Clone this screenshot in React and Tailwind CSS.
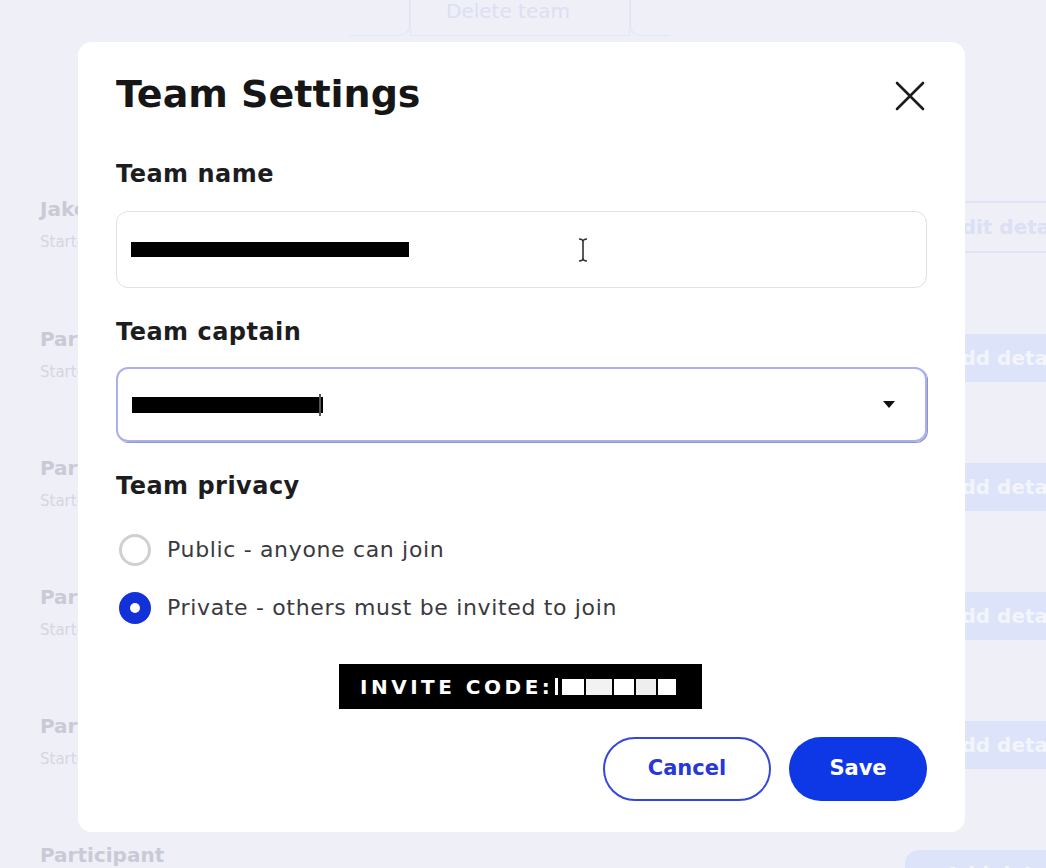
import React from 'react';

// Faded page content that sits behind the dialog
const ROWS = [
  { name: 'Jake Sample', sub: 'Starter', action: 'Edit details', outlined: true },
  { name: 'Participant', sub: 'Starter', action: 'Add details' },
  { name: 'Participant', sub: 'Starter', action: 'Add details' },
  { name: 'Participant', sub: 'Starter', action: 'Add details' },
  { name: 'Participant', sub: 'Starter', action: 'Add details' },
  { name: 'Participant', sub: 'Starter', action: 'Add details', wide: true },
];

function CloseIcon() {
  return (
    <svg width="32" height="32" viewBox="0 0 32 32" fill="none" stroke="#1c1c1c" strokeWidth="2.6" strokeLinecap="round">
      <path d="M3 3L29 29M29 3L3 29" />
    </svg>
  );
}

function IBeam() {
  return (
    <svg width="12" height="26" viewBox="0 0 12 26" fill="none" stroke="#333" strokeWidth="1.6">
      <path d="M2 2C4 2 6 3 6 5V21C6 23 4 24 2 24M10 2C8 2 6 3 6 5M10 24C8 24 6 23 6 21" />
    </svg>
  );
}

export default function App() {
  return (
    <div className="relative w-[1046px] h-[868px] overflow-hidden bg-[#efeff8]" style={{ fontFamily: '"DejaVu Sans", Verdana, sans-serif' }}>
      {/* background page */}
      <div className="flex flex-col">
        <div className="flex justify-center -mt-[14px] pr-[26px]">
          <div className="w-[60px] h-[50px] border border-[#e2e5f6] rounded-r-[10px] border-l-0" />
          <div className="w-[220px] h-[50px] border border-[#e4e6f6] flex items-end justify-center pb-[9px] pr-[24px] text-[20px] text-[#dcdff2]">Delete team</div>
          <div className="w-[40px] h-[50px] border border-[#e2e5f6] rounded-l-[10px] border-r-0" />
        </div>
        <div className="flex flex-col gap-[75px] mt-[162px] pl-[40px]">
          {ROWS.map((r, i) => (
            <div key={i} className="flex items-start justify-between">
              <div className="flex flex-col gap-[10px] -mt-[2px]">
                <div className="text-[20px] font-bold leading-[26px] text-[#cacad6]">{r.name}</div>
                <div className="text-[15px] leading-[20px] text-[#d6d6e0]">{r.sub}</div>
              </div>
              <div
                className={
                  r.outlined
                    ? 'w-[210px] h-[52px] -mr-[110px] mt-[3px] rounded-l-[10px] border-2 border-r-0 border-[#dfe3f6] flex items-center text-[20px] font-bold text-[#dbe0f5]'
                    : r.wide
                      ? 'w-[200px] h-[48px] -mr-[59px] mt-[6px] rounded-l-[14px] bg-[#dde3f8] flex items-center pl-[40px] text-[20px] font-bold text-[#f3f5fd]'
                      : 'w-[210px] h-[48px] -mr-[110px] mt-[6px] rounded-l-[10px] bg-[#dde3f8] flex items-center text-[20px] font-bold text-[#f3f5fd]'
                }
              >
                {r.action}
              </div>
            </div>
          ))}
        </div>
      </div>

      {/* dialog */}
      <div className="absolute left-[78px] top-[42px] w-[887px] h-[790px] bg-white rounded-[14px] px-[38px] pt-[28px] flex flex-col text-[#1d1d1f]">
        <div className="flex items-center justify-between">
          <h2 className="text-[38px] leading-[48px] font-bold text-[#161616]">Team Settings</h2>
          <button className="mr-[1px] mt-[3px]"><CloseIcon /></button>
        </div>

        <label className="mt-[42px] text-[24px] leading-[28px] font-bold tracking-[0.02em]">Team name</label>
        <div className="mt-[23px] h-[77px] rounded-[12px] border-[1.5px] border-[#e1e1e6] flex items-center pl-[14px] relative">
          <div className="w-[278px] h-[15px] bg-black" />
          <div className="absolute left-[460px] top-[25px]"><IBeam /></div>
        </div>

        <label className="mt-[30px] text-[24px] leading-[28px] font-bold tracking-[0.02em]">Team captain</label>
        <div className="mt-[21px] h-[75px] rounded-[12px] border-2 border-[#aab0ee] shadow-[1px_1px_0_#8f95c8] flex items-center justify-between pl-[14px] pr-[30px]">
          <div className="flex items-center">
            <div className="w-[191px] h-[16px] bg-black" />
            <div className="w-[1.5px] h-[22px] bg-[#555] -ml-[4px]" />
          </div>
          <svg width="12" height="7" viewBox="0 0 12 7"><path d="M0 0H12L6 7Z" fill="#111" /></svg>
        </div>

        <label className="mt-[30px] text-[24px] leading-[28px] font-bold tracking-[0.02em]">Team privacy</label>
        <div className="mt-[34px] flex flex-col gap-[26px]">
          <div className="flex items-center gap-[16px] pl-[3px]">
            <span className="w-[32px] h-[32px] rounded-full border-[3px] border-[#cfcfd4] bg-white" />
            <span className="text-[22px] leading-[32px] tracking-[0.03em] text-[#3a3a3e]">Public - anyone can join</span>
          </div>
          <div className="flex items-center gap-[16px] pl-[3px]">
            <span className="w-[32px] h-[32px] rounded-full bg-[#1331d8] flex items-center justify-center">
              <span className="w-[10px] h-[10px] rounded-full bg-white" />
            </span>
            <span className="text-[22px] leading-[32px] tracking-[0.03em] text-[#3a3a3e]">Private - others must be invited to join</span>
          </div>
        </div>

        <div className="mt-[40px] self-center w-[363px] h-[45px] bg-black flex items-center pl-[21px] -ml-[2px]">
          <span className="text-[20px] font-bold tracking-[3.5px] text-white">INVITE CODE:</span>
          <span className="ml-[2px] w-[3px] h-[17px] bg-white" />
          <span className="ml-[4px] flex gap-[2px]">
            <span className="w-[22px] h-[16px] bg-white" />
            <span className="w-[26px] h-[16px] bg-[#f2f2f2]" />
            <span className="w-[20px] h-[16px] bg-white" />
            <span className="w-[20px] h-[16px] bg-[#eeeeee]" />
            <span className="w-[18px] h-[16px] bg-white" />
          </span>
        </div>

        <div className="mt-[28px] flex justify-end gap-[18px]">
          <button className="w-[168px] h-[64px] rounded-full border-2 border-[#3446dc] text-[21px] font-bold text-[#2638d6]">Cancel</button>
          <button className="w-[138px] h-[64px] rounded-full bg-[#0e37e6] text-[21px] font-bold text-white">Save</button>
        </div>
      </div>
    </div>
  );
}
